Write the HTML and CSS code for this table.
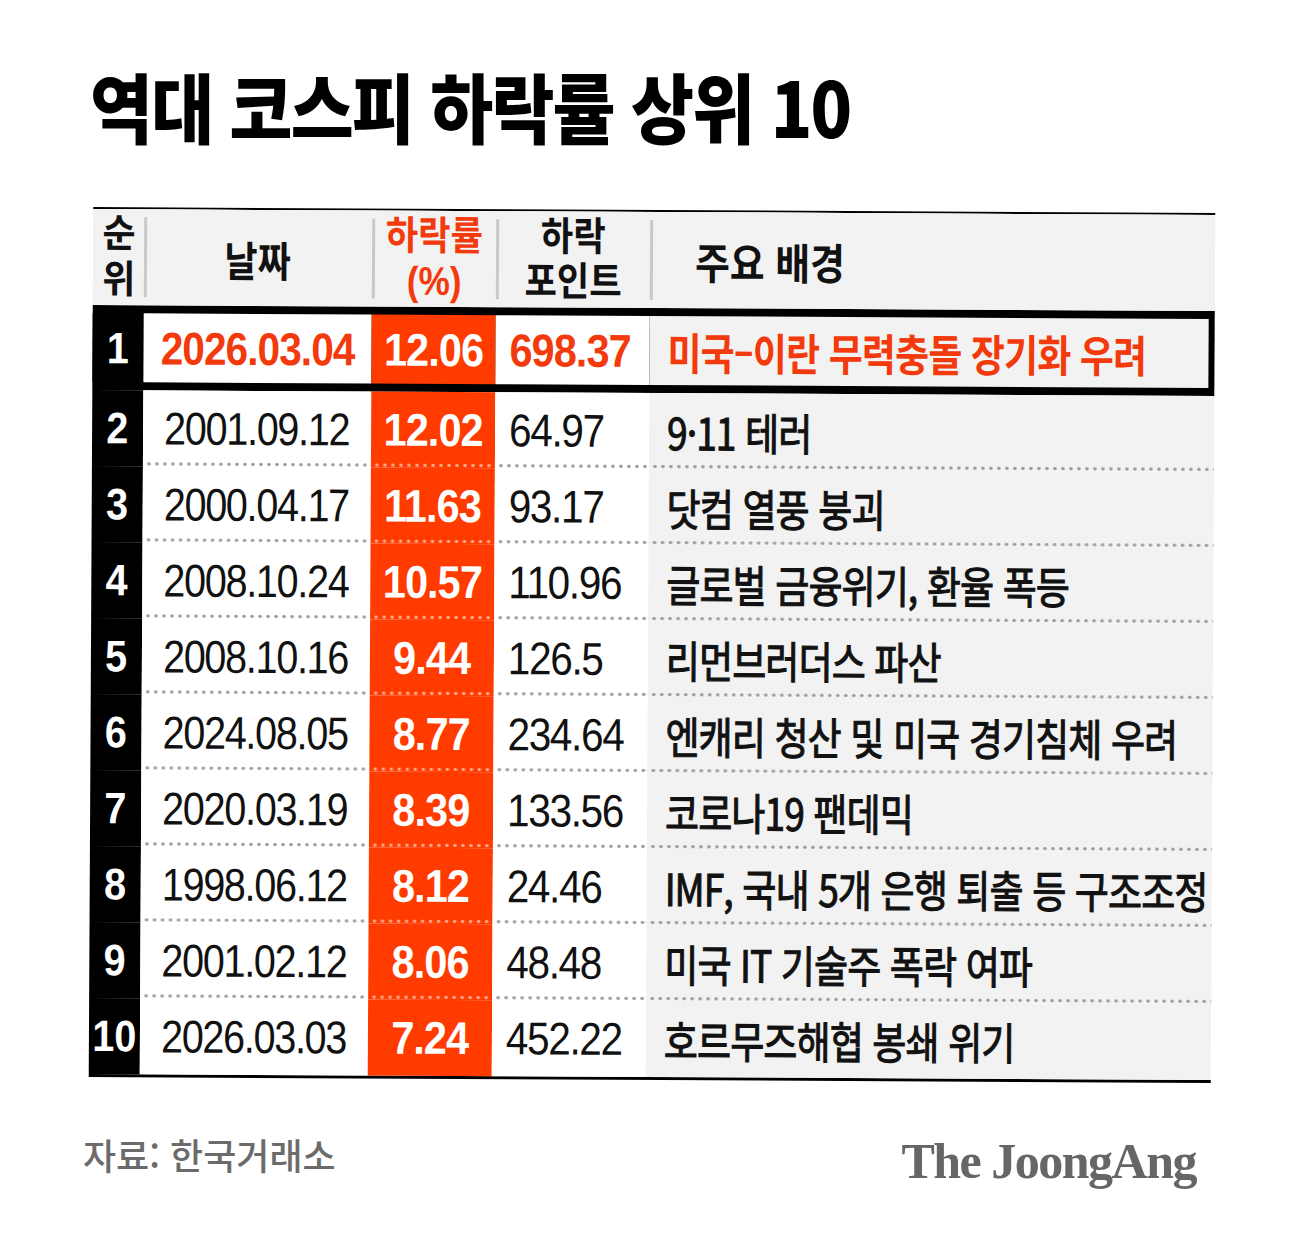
FILE: index.html
```html
<!DOCTYPE html>
<html lang="ko">
<head>
<meta charset="utf-8">
<title>역대 코스피 하락률 상위 10</title>
<link rel="stylesheet" href="styles.css">
</head>
<body>
<div class="page">
  <h1 class="title"><span class="t">역대 코스피 하락률 상위 10</span></h1>

  <div class="table">
    <div class="row head">
      <div class="c rank"><span class="t">순<br>위</span></div>
      <div class="c date sep"><span class="t">날짜</span></div>
      <div class="c rate sep"><span class="t">하락률<br>(%)</span></div>
      <div class="c pts sep"><span class="t">하락<br>포인트</span></div>
      <div class="c desc sep"><span class="t">주요 배경</span></div>
    </div>

    <div class="row top">
      <div class="c rank"><span class="t">1</span></div>
      <div class="c date"><span class="t">2026.03.04</span></div>
      <div class="c rate"><span class="t">12.06</span></div>
      <div class="c pts"><span class="t">698.37</span></div>
      <div class="c desc"><span class="t">미국–이란 무력충돌 장기화 우려</span></div>
    </div>

    <div class="row dot">
      <div class="c rank"><span class="t">2</span></div>
      <div class="c date"><span class="t">2001.09.12</span></div>
      <div class="c rate"><span class="t">12.02</span></div>
      <div class="c pts"><span class="t">64.97</span></div>
      <div class="c desc"><span class="t">9·11 테러</span></div>
    </div>

    <div class="row dot">
      <div class="c rank"><span class="t">3</span></div>
      <div class="c date"><span class="t">2000.04.17</span></div>
      <div class="c rate"><span class="t">11.63</span></div>
      <div class="c pts"><span class="t">93.17</span></div>
      <div class="c desc"><span class="t">닷컴 열풍 붕괴</span></div>
    </div>

    <div class="row dot">
      <div class="c rank"><span class="t">4</span></div>
      <div class="c date"><span class="t">2008.10.24</span></div>
      <div class="c rate"><span class="t">10.57</span></div>
      <div class="c pts"><span class="t">110.96</span></div>
      <div class="c desc"><span class="t">글로벌 금융위기, 환율 폭등</span></div>
    </div>

    <div class="row dot">
      <div class="c rank"><span class="t">5</span></div>
      <div class="c date"><span class="t">2008.10.16</span></div>
      <div class="c rate"><span class="t">9.44</span></div>
      <div class="c pts"><span class="t">126.5</span></div>
      <div class="c desc"><span class="t">리먼브러더스 파산</span></div>
    </div>

    <div class="row dot">
      <div class="c rank"><span class="t">6</span></div>
      <div class="c date"><span class="t">2024.08.05</span></div>
      <div class="c rate"><span class="t">8.77</span></div>
      <div class="c pts"><span class="t">234.64</span></div>
      <div class="c desc"><span class="t">엔캐리 청산 및 미국 경기침체 우려</span></div>
    </div>

    <div class="row dot">
      <div class="c rank"><span class="t">7</span></div>
      <div class="c date"><span class="t">2020.03.19</span></div>
      <div class="c rate"><span class="t">8.39</span></div>
      <div class="c pts"><span class="t">133.56</span></div>
      <div class="c desc"><span class="t">코로나19 팬데믹</span></div>
    </div>

    <div class="row dot">
      <div class="c rank"><span class="t">8</span></div>
      <div class="c date"><span class="t">1998.06.12</span></div>
      <div class="c rate"><span class="t">8.12</span></div>
      <div class="c pts"><span class="t">24.46</span></div>
      <div class="c desc"><span class="t">IMF, 국내 5개 은행 퇴출 등 구조조정</span></div>
    </div>

    <div class="row dot">
      <div class="c rank"><span class="t">9</span></div>
      <div class="c date"><span class="t">2001.02.12</span></div>
      <div class="c rate"><span class="t">8.06</span></div>
      <div class="c pts"><span class="t">48.48</span></div>
      <div class="c desc"><span class="t">미국 IT 기술주 폭락 여파</span></div>
    </div>

    <div class="row">
      <div class="c rank"><span class="t">10</span></div>
      <div class="c date"><span class="t">2026.03.03</span></div>
      <div class="c rate"><span class="t">7.24</span></div>
      <div class="c pts"><span class="t">452.22</span></div>
      <div class="c desc"><span class="t">호르무즈해협 봉쇄 위기</span></div>
    </div>
  </div>

  <div class="footer">
    <div class="src"><span class="t">자료: 한국거래소</span></div>
    <div class="logo">The JoongAng</div>
  </div>
</div>
</body>
</html>
```

FILE: styles.css
```css
* {
  box-sizing: border-box;
  margin: 0;
  padding: 0;
}

html, body {
  background: #fff;
}

body {
  width: 1292px;
  height: 1241px;
  overflow: hidden;
  font-family: "Noto Sans CJK KR", "Noto Sans", sans-serif;
  color: #111;
}

.page {
  padding-top: 69px;
}

.t {
  display: inline-block;
  white-space: nowrap;
}

/* Title */
.title {
  margin-left: 90px;
  height: 72px;
  font-size: 76px;
  line-height: 72px;
  font-weight: 900;
  letter-spacing: -2px;
  color: #000;
}

.title .t {
  transform: scaleX(0.9);
  transform-origin: left center;
}

/* Table */
.table {
  margin: 69px 0 0 91px;
  width: 1122px;
  border-top: 2px solid #000;
  border-bottom: 3px solid #000;
  transform: rotate(0.3deg);
  transform-origin: 50% 50%;
}

.row {
  display: grid;
  grid-template-columns: 51px 228px 124px 154px minmax(0, 1fr);
  height: 76px;
}

.c {
  display: flex;
  align-items: center;
  justify-content: center;
  min-width: 0;
}

.rank { background: #000; color: #fff; }
.date { background: #fff; }
.rate { background: #ff3b00; color: #fff; }
.pts  { background: #fff; justify-content: flex-start; padding-left: 14px; }
.desc { background: #f2f2f2; justify-content: flex-start; padding-left: 18px; }

/* number text */
.rank .t,
.date .t,
.rate .t,
.pts .t {
  font-family: "Liberation Sans", Arial, sans-serif;
  font-size: 46px;
}

.date .t {
  letter-spacing: -1.5px;
  transform: scaleX(0.86);
  transform-origin: center center;
}

.pts .t {
  letter-spacing: -1.5px;
  transform: scaleX(0.88);
  transform-origin: left center;
}

.rank .t {
  font-weight: 700;
  font-size: 44px;
  transform: scaleX(0.9);
  transform-origin: center center;
}

.rate .t {
  font-weight: 700;
  letter-spacing: -1px;
  transform: scaleX(0.9);
  transform-origin: center center;
}

.desc .t {
  font-size: 44px;
  font-weight: 400;
  letter-spacing: -1px;
  -webkit-text-stroke: 1.1px currentColor;
  transform: scaleX(0.84);
  transform-origin: left center;
}

/* header row */
.head {
  height: 96px;
  background: #f2f2f2;
}

.head .c {
  background-color: #f2f2f2;
  color: #111;
}

.head .sep {
  background-image: linear-gradient(#c9c9c9, #c9c9c9);
  background-size: 3px 80px;
  background-position: 0 50%;
  background-repeat: no-repeat;
}

.head .t,
.head .rank .t,
.head .date .t,
.head .rate .t,
.head .pts .t {
  font-family: "Liberation Sans", "Noto Sans CJK KR", sans-serif;
  font-weight: 700;
  text-align: center;
  letter-spacing: 0;
  -webkit-text-stroke: 0;
  transform: scaleX(0.88);
  transform-origin: center center;
}

.head .rank .t {
  font-size: 39px;
  line-height: 46px;
  transform: scaleX(0.92);
}

.head .date .t {
  font-family: "Noto Sans CJK KR", sans-serif;
  font-size: 42px;
  transform: scaleX(0.86);
}

.head .rate .t {
  font-size: 40px;
  line-height: 45px;
  color: #f23a0c;
}

.head .pts {
  justify-content: center;
  padding-left: 0;
}

.head .pts .t {
  font-size: 40px;
  line-height: 45px;
}

.head .desc {
  padding-left: 45px;
}

.head .desc .t {
  font-family: "Noto Sans CJK KR", sans-serif;
  font-size: 43px;
  transform-origin: left center;
}

/* highlighted first row */
.top {
  height: 85px;
  background: #000;
  padding: 8px 6px 8px 0;
}

.top .date .t,
.top .pts .t,
.top .desc .t {
  font-weight: 700;
  color: #f23a0c;
}

.top .date .t {
  letter-spacing: -1px;
  transform: scaleX(0.88);
}

.top .pts .t {
  letter-spacing: -1px;
  transform: scaleX(0.9);
}

.top .desc .t {
  -webkit-text-stroke: 0;
  transform: scaleX(0.84);
}

/* dotted separators */
.dot .date,
.dot .pts,
.dot .desc,
.dot .rate {
  background-image: radial-gradient(circle, #9c9c9c 1.4px, rgba(156, 156, 156, 0) 2px);
  background-size: 8px 5px;
  background-repeat: repeat-x;
  background-position: 2px 100%;
}

.dot .rate {
  background-image: radial-gradient(circle, rgba(255, 255, 255, 0.55) 1.4px, rgba(255, 255, 255, 0) 2px);
}

/* footer */
.footer {
  display: flex;
  justify-content: space-between;
  align-items: flex-start;
  margin: 50px 96px 0 83px;
}

.src {
  padding-top: 4px;
  font-size: 36px;
  line-height: 40px;
  font-weight: 500;
  color: #6b6b6b;
}

.src .t {
  transform-origin: left center;
}

.logo {
  margin-top: 6px;
  font-family: "Liberation Serif", "Times New Roman", serif;
  font-weight: 700;
  font-size: 50px;
  line-height: 50px;
  letter-spacing: -1.5px;
  color: #666;
}
```
